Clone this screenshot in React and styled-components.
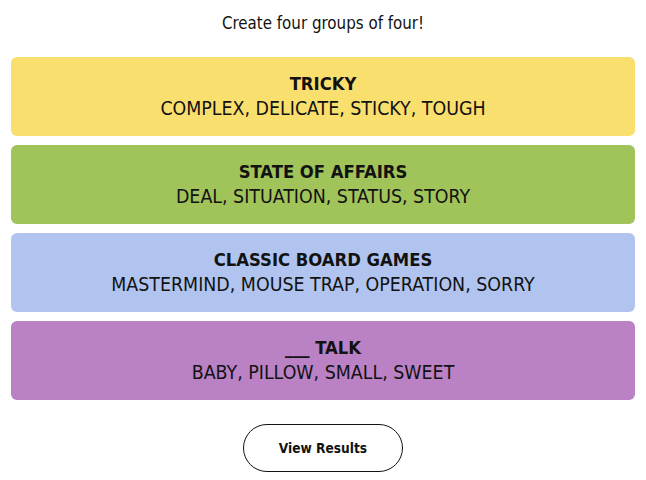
import React from "react";
import styled, { createGlobalStyle } from "styled-components";

const Global = createGlobalStyle`
  html, body { margin: 0; padding: 0; background: #fff; }
  body { font-family: "DejaVu Sans Condensed", "Liberation Sans", sans-serif; color: #121212; }
`;

const Page = styled.div`
  display: flex;
  flex-direction: column;
  align-items: center;
  padding: 12px 11px 0;
`;

const Prompt = styled.p`
  margin: 0;
  font-size: 16.8px;
  line-height: 22px;
  text-align: center;
`;

const Groups = styled.div`
  width: 100%;
  display: flex;
  flex-direction: column;
  gap: 9px;
  margin-top: 23px;
`;

const Group = styled.div`
  height: 79px;
  box-sizing: border-box;
  padding-bottom: 1px;
  border-radius: 6px;
  background: ${(p) => p.$color};
  display: flex;
  flex-direction: column;
  align-items: center;
  justify-content: center;
  text-align: center;
`;

const Title = styled.h3`
  margin: 0;
  font-size: 18.3px;
  line-height: 24px;
  font-weight: 700;
`;

const Members = styled.div`
  margin-top: 1px;
  font-size: 19.4px;
  line-height: 24px;
`;

const Button = styled.button`
  margin-top: 24px;
  width: 160px;
  height: 48px;
  border: 1px solid #121212;
  border-radius: 24px;
  background: #fff;
  font-family: inherit;
  font-size: 13.6px;
  font-weight: 700;
  color: #121212;
`;

const groups = [
  { title: "TRICKY", members: "COMPLEX, DELICATE, STICKY, TOUGH", color: "#f9df6d" },
  { title: "STATE OF AFFAIRS", members: "DEAL, SITUATION, STATUS, STORY", color: "#a0c35a" },
  { title: "CLASSIC BOARD GAMES", members: "MASTERMIND, MOUSE TRAP, OPERATION, SORRY", color: "#b0c4ef" },
  { title: "___ TALK", members: "BABY, PILLOW, SMALL, SWEET", color: "#ba81c5" },
];

export default function App() {
  return (
    <>
      <Global />
      <Page>
        <Prompt>Create four groups of four!</Prompt>
        <Groups>
          {groups.map((g) => (
            <Group key={g.title} $color={g.color}>
              <Title>{g.title}</Title>
              <Members>{g.members}</Members>
            </Group>
          ))}
        </Groups>
        <Button>View Results</Button>
      </Page>
    </>
  );
}
